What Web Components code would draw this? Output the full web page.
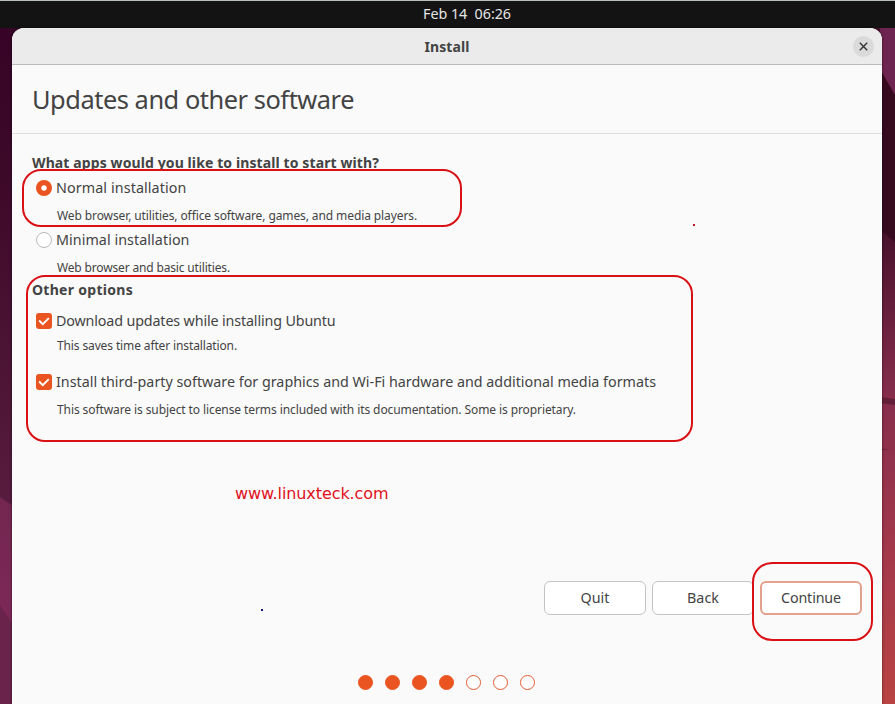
<!DOCTYPE html>
<html lang="en"><head><meta charset="utf-8"><title>Install</title>
<style>
html,body{margin:0;height:100%;overflow:hidden}
body{font-family:"Noto Sans","Open Sans",sans-serif;color:#434343}
</style></head><body>
<installer-desktop></installer-desktop>
<script>
const define=(name,html,setup)=>customElements.define(name,class extends HTMLElement{
  connectedCallback(){
    if(this.shadowRoot)return;
    const t=document.createElement('template');t.innerHTML=html;
    this.attachShadow({mode:'open'}).append(t.content.cloneNode(true));
    if(setup)setup(this,this.shadowRoot);
  }
});

/* One line of text, tracked so that it fills the width in its "w" attribute. */
define('fit-text',`<style>
:host{display:block;width:max-content;white-space:pre;font-size:14.3px;line-height:20px}
:host([bold]){font-weight:700;font-size:14px}
:host([small]){font-size:12px}
:host([title]){font-size:25.4px;line-height:36px}
:host([mark]){font:16px/20px "DejaVu Sans",sans-serif;color:#e0101a}
span{display:inline-block}
</style><span></span>`,(el,r)=>{
  const s=r.querySelector('span');s.textContent=el.getAttribute('t');
  const w=+el.getAttribute('w'),n=s.textContent.length;
  s.style.letterSpacing=((w-s.getBoundingClientRect().width)/n)+'px';
});

define('top-panel',`<style>
:host{display:flex;box-sizing:border-box;height:28px;background:#131313;border-top:1px solid #b9c0bc;color:#e6e6e6;justify-content:center;padding:3px 0 0 39px}
</style><fit-text t="Feb 14  06:26" w="88"></fit-text>`);

define('title-bar',`<style>
:host{display:grid;grid-template-columns:1fr auto 1fr;height:36px;background:#ebebeb;border-bottom:1px solid #bcbcbc;align-items:center}
.t{grid-column:2;padding-top:2px}
button{justify-self:end;width:21px;height:21px;border:0;border-radius:50%;background:#dadada;padding:0;margin-right:8px;display:grid;place-items:center}
</style><fit-text class="t" bold t="Install" w="45"></fit-text>
<button aria-label="Close"><svg width="9" height="9" viewBox="0 0 9 9"><path d="M.8.8l7.4 7.4M8.200.8L.8 8.200" stroke="#333" stroke-width="1.4"/></svg></button>`);

define('choice-mark',`<style>
:host{display:block;width:16px;height:16px}svg{display:block}
.c,.r,.o{display:none}:host([kind=check]) .c,:host([kind=radio]) .r,:host([kind=off]) .o{display:block}
</style><svg class="c" width="16" height="16"><rect width="16" height="16" rx="3" fill="#e95420"/><path d="M3.100 7.500l3.700 3.700 6-6.100" fill="none" stroke="#fff" stroke-width="1.9"/></svg>
<svg class="r" width="16" height="16"><circle cx="8" cy="8" r="8" fill="#e95420"/><circle cx="8" cy="8" r="2.7" fill="#fff"/></svg>
<svg class="o" width="16" height="16"><circle cx="8" cy="8" r="7.5" fill="#fff" stroke="#b8b8b8"/></svg>`);

define('install-option',`<style>
:host{display:grid;grid-template-columns:16px auto;column-gap:4px;padding-left:4px;justify-content:start}
choice-mark{margin-top:2px}
.note{grid-column:2;margin:var(--gap,8px) 0 0 1px}
</style><choice-mark></choice-mark><slot></slot><div class="note"><slot name="note"></slot></div>`,
(el,r)=>r.querySelector('choice-mark').setAttribute('kind',el.getAttribute('kind')));

define('push-button',`<style>
:host{display:block}
button{box-sizing:border-box;width:102px;height:34px;border:1px solid #c4c4c4;border-radius:6px;background:#fff;color:inherit;font:inherit;padding:0 0 1px;display:grid;place-items:center}
:host([focused]) button{border:2px solid #e4a28c}
</style><button><slot></slot></button>`);

define('step-dots',`<style>
:host{display:flex;gap:12px;justify-content:center}
i{box-sizing:border-box;width:15px;height:15px;border-radius:50%;border:1.4px solid #e15a32;background:#fff}
i.on{background:#e95420;border-color:#e95420}
</style><i class="on"></i><i class="on"></i><i class="on"></i><i class="on"></i><i></i><i></i><i></i>`);

define('install-window',`<style>
:host{display:flex;flex-direction:column;width:870px;height:676px;margin:0 auto 0 12px;border-radius:12px 12px 0 0;overflow:hidden;background:#fafafa;box-shadow:0 0 3px #0008}
header{box-sizing:border-box;height:69px;border-bottom:1px solid #dedede;padding:16px 20px 0}
main{padding:19px 20px 0;height:429px;box-sizing:border-box}
.q{margin-bottom:5px}
.min{margin-top:4px}.o{margin:2px 0 11px}.third{margin-top:16px;--gap:8px}.upd{--gap:5px}
nav{display:flex;gap:6px;justify-content:flex-end;padding:18px 20px 0}
step-dots{margin-top:60px;padding-right:1px}
</style>
<title-bar></title-bar>
<header><fit-text title t="Updates and other software" w="322"></fit-text></header>
<main>
<fit-text class="q" bold t="What apps would you like to install to start with?" w="347"></fit-text>
<install-option kind="radio"><fit-text t="Normal installation" w="130.500"></fit-text><fit-text slot="note" small t="Web browser, utilities, office software, games, and media players." w="360"></fit-text></install-option>
<install-option class="min" kind="off"><fit-text t="Minimal installation" w="133.500"></fit-text><fit-text slot="note" small t="Web browser and basic utilities." w="173"></fit-text></install-option>
<fit-text class="o" bold t="Other options" w="101"></fit-text>
<install-option class="upd" kind="check"><fit-text t="Download updates while installing Ubuntu" w="279.500"></fit-text><fit-text slot="note" small t="This saves time after installation." w="180"></fit-text></install-option>
<install-option class="third" kind="check"><fit-text t="Install third-party software for graphics and Wi-Fi hardware and additional media formats" w="600"></fit-text><fit-text slot="note" small t="This software is subject to license terms included with its documentation. Some is proprietary." w="519"></fit-text></install-option>
</main>
<nav><push-button><fit-text t="Quit" w="29"></fit-text></push-button><push-button><fit-text t="Back" w="32"></fit-text></push-button><push-button focused><fit-text t="Continue" w="60"></fit-text></push-button></nav>
<step-dots></step-dots>`);

/* Red outlines, caption and stray dots drawn over the window. */
define('markup-layer',`<style>
:host{position:absolute;inset:0;pointer-events:none}svg{position:absolute;inset:0}
fit-text{position:absolute;left:235px;top:484px}
</style><svg width="895" height="704" fill="none" stroke="#da1014" stroke-width="2">
<rect x="23" y="170" width="438" height="56" rx="18"/>
<rect x="27" y="276" width="665" height="165" rx="18"/>
<rect x="753" y="563" width="119" height="77" rx="19"/>
<rect x="693" y="224" width="2" height="2" fill="#c51625" stroke="none"/>
<rect x="261" y="609" width="2" height="2" fill="#15156e" stroke="none"/>
</svg><fit-text mark t="www.linuxteck.com" w="153.500"></fit-text>`);

define('desk-wallpaper',`<style>:host{position:absolute;inset:0;z-index:-1}svg{display:block}</style>
<svg width="895" height="704"><defs>
<linearGradient id="l" x1="0" y1="0" x2="0" y2="1"><stop offset="0" stop-color="#350326"/><stop offset=".25" stop-color="#3d0929"/><stop offset=".7" stop-color="#571b3d"/><stop offset="1" stop-color="#642149"/></linearGradient>
<linearGradient id="r" gradientUnits="userSpaceOnUse" x1="0" y1="230" x2="0" y2="704"><stop offset="0" stop-color="#48112c"/><stop offset=".35" stop-color="#862d4c"/><stop offset=".7" stop-color="#a5394b"/><stop offset="1" stop-color="#b94342"/></linearGradient>
<linearGradient id="m" gradientUnits="userSpaceOnUse" x1="0" y1="500" x2="0" y2="704"><stop offset="0" stop-color="#742650"/><stop offset=".6" stop-color="#7c2857"/><stop offset="1" stop-color="#7b2850"/></linearGradient></defs>
<rect width="447" height="704" fill="url(#l)"/><path d="M0 497L13 506V704H0z" fill="url(#m)"/><path d="M0 605L13 625V704H0z" fill="#6a234b"/>
<rect x="447" width="448" height="704" fill="url(#r)"/><path d="M880 28H895V242L880 230z" fill="#360b20"/><path d="M880 28H895V95L880 69z" fill="#6e2450"/>
<path d="M880 397L895 399V405L880 403z" fill="#652039"/><path d="M880 448.500L890 449.500 880 450.500z" fill="#70253e"/></svg>`);

define('installer-desktop',`<style>
:host{display:block;position:relative;width:895px;height:704px;overflow:hidden;isolation:isolate}
</style><desk-wallpaper></desk-wallpaper><top-panel></top-panel><install-window></install-window><markup-layer></markup-layer>`);
</script></body></html>
